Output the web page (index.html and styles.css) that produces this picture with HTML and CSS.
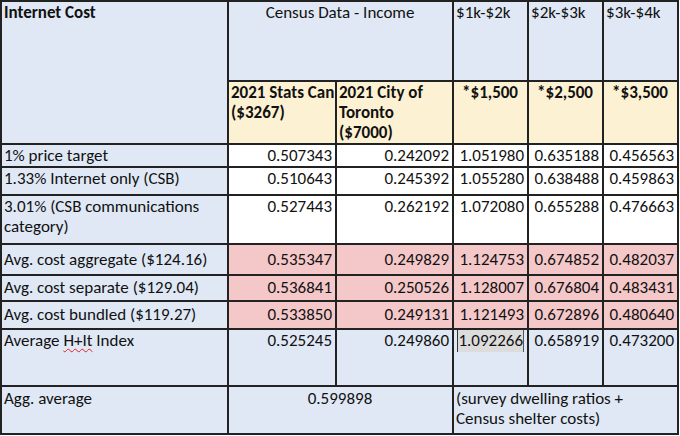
FILE: index.html
```html
<!DOCTYPE html>
<html>
<head>
<meta charset="utf-8">
<link rel="stylesheet" href="styles.css">
</head>
<body>
<table class="sheet">
  <colgroup>
    <col class="c1"><col class="c2"><col class="c3"><col class="c4"><col class="c5"><col class="c6">
  </colgroup>
  <tr class="r-h1">
    <td rowspan="2" class="blue bold">Internet Cost</td>
    <td colspan="2" class="blue center">Census Data - Income</td>
    <td class="blue">$1k-$2k</td>
    <td class="blue">$2k-$3k</td>
    <td class="blue">$3k-$4k</td>
  </tr>
  <tr class="r-h2">
    <td class="yellow bold nowrap">2021 Stats Can<br>($3267)</td>
    <td class="yellow bold nowrap">2021 City of<br>Toronto<br>($7000)</td>
    <td class="yellow bold center">*$1,500</td>
    <td class="yellow bold center">*$2,500</td>
    <td class="yellow bold center">*$3,500</td>
  </tr>
  <tr class="r-a">
    <td class="blue">1% price target</td>
    <td class="num">0.507343</td><td class="num">0.242092</td><td class="num">1.051980</td><td class="num">0.635188</td><td class="num">0.456563</td>
  </tr>
  <tr class="r-b">
    <td class="blue">1.33% Internet only (CSB)</td>
    <td class="num">0.510643</td><td class="num">0.245392</td><td class="num">1.055280</td><td class="num">0.638488</td><td class="num">0.459863</td>
  </tr>
  <tr class="r-c">
    <td class="blue">3.01% (CSB communications<br>category)</td>
    <td class="num">0.527443</td><td class="num">0.262192</td><td class="num">1.072080</td><td class="num">0.655288</td><td class="num">0.476663</td>
  </tr>
  <tr class="r-d">
    <td class="blue">Avg. cost aggregate ($124.16)</td>
    <td class="num pink">0.535347</td><td class="num pink">0.249829</td><td class="num pink">1.124753</td><td class="num pink">0.674852</td><td class="num pink">0.482037</td>
  </tr>
  <tr class="r-e">
    <td class="blue">Avg. cost separate ($129.04)</td>
    <td class="num pink">0.536841</td><td class="num pink">0.250526</td><td class="num pink">1.128007</td><td class="num pink">0.676804</td><td class="num pink">0.483431</td>
  </tr>
  <tr class="r-f">
    <td class="blue">Avg. cost bundled ($119.27)</td>
    <td class="num pink">0.533850</td><td class="num pink">0.249131</td><td class="num pink">1.121493</td><td class="num pink">0.672896</td><td class="num pink">0.480640</td>
  </tr>
  <tr class="r-g">
    <td class="blue">Average <span class="spell">H+It</span> Index</td>
    <td class="num blue">0.525245</td><td class="num blue">0.249860</td><td class="num blue"><span class="sel">1.092266</span></td><td class="num blue">0.658919</td><td class="num blue">0.473200</td>
  </tr>
  <tr class="r-h">
    <td class="blue">Agg. average</td>
    <td colspan="2" class="blue center">0.599898</td>
    <td colspan="3" class="blue">(survey dwelling ratios +<br>Census shelter costs)</td>
  </tr>
</table>
</body>
</html>
```
FILE: styles.css
```css
html, body {
  margin: 0;
  padding: 0;
  background: #ffffff;
}
.sheet {
  border-collapse: collapse;
  table-layout: fixed;
  width: 677px;
  font-family: "Carlito", "Lato", "Liberation Sans", sans-serif;
  font-size: 17px;
  line-height: 20px;
  color: #111;
}
.c1 { width: 227px; }
.c2 { width: 108px; }
.c3 { width: 117px; }
.c4 { width: 75px; }
.c5 { width: 75px; }
.c6 { width: 75px; }
.sheet td {
  border: 2px solid #222;
  padding: 1px 3px 0 2px;
  vertical-align: top;
  background: #ffffff;
  overflow: hidden;
  white-space: nowrap;
}
.sheet td.blue { background: #dfe8f4; }
.sheet td.yellow { background: #fdf1d3; padding-top: 1px; line-height: 20px; }
.sheet td.pink { background: #f4c7c9; }
.bold { font-weight: bold; }
.center { text-align: center; }
.num { text-align: right; }
.r-h1 { height: 80px; }
.r-h2 { height: 62px; }
.r-a { height: 23px; }
.r-b { height: 28px; }
.r-c { height: 49px; }
.r-d { height: 31px; }
.r-d td, .r-e td, .r-f td { vertical-align: middle; padding-top: 0; }
.r-e { height: 26px; }
.r-f { height: 28px; }
.r-g { height: 57px; }
.r-h { height: 48px; }
.r-h td { padding-top: 2px; }
.spell {
  text-decoration: underline wavy #d22;
  text-decoration-thickness: 1px;
  text-underline-offset: 2px;
}
.sel {
  background: #dcdcdc;
  border-left: 1px solid #333;
  border-right: 1px solid #555;
  padding: 1px 0;
}
```
